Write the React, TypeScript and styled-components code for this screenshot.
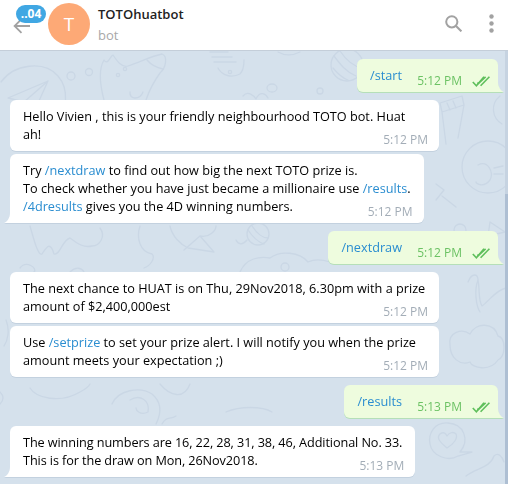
import { createGlobalStyle, styled } from "styled-components";

const GlobalStyle = createGlobalStyle`
  html, body {
    margin: 0;
    padding: 0;
    background: #d5e1ec;
  }
  #root {
    height: 484px;
  }
`;

const Page = styled.div`
  position: relative;
  width: 508px;
  height: 484px;
  overflow: hidden;
  display: flex;
  flex-direction: column;
  font-family: "Open Sans", sans-serif;
  font-size: 12.7px;
  line-height: 18px;
  color: #000;
`;

const Header = styled.header`
  position: relative;
  z-index: 2;
  flex: 0 0 51px;
  box-sizing: border-box;
  display: flex;
  align-items: center;
  padding: 0 14px 3px 13px;
  background: #fff;
  border-bottom: 1px solid #c4ced9;
`;

const BackButton = styled.div`
  position: relative;
  width: 17px;
  height: 16px;
  margin-top: 4px;
  margin-right: 18px;
  color: #a2a2a2;
`;

const UnreadBadge = styled.span`
  position: absolute;
  top: -13px;
  left: 3px;
  width: 30px;
  height: 18px;
  border-radius: 9px;
  background: #40a7e3;
  color: #fff;
  font-size: 12px;
  font-weight: 700;
  line-height: 18px;
  text-align: center;
`;

const Avatar = styled.div`
  flex: none;
  width: 42px;
  height: 42px;
  margin-right: 8px;
  border-radius: 50%;
  background: #fda976;
  color: #fff;
  font-size: 19px;
  line-height: 42px;
  text-align: center;
`;

const PeerInfo = styled.div`
  flex: 1;
  display: flex;
  flex-direction: column;
  gap: 3px;
  padding-top: 1px;
`;

const PeerName = styled.div`
  font-size: 13px;
  font-weight: 600;
  color: #222;
`;

const PeerStatus = styled.div`
  font-size: 13px;
  color: #a8a8a8;
`;

const HeaderIcons = styled.div`
  display: flex;
  align-items: center;
  gap: 27px;
  color: #a2a2a2;
`;

const Chat = styled.main`
  position: relative;
  flex: 1;
  display: flex;
  flex-direction: column;
  padding: 8px 10px 0;
`;

const Doodles = styled.svg`
  position: absolute;
  top: -51px;
  left: 0;
  fill: none;
  stroke: #cad7e5;
  stroke-width: 1.3;
  stroke-linecap: round;
  stroke-linejoin: round;
`;

const ScrollTrack = styled.div`
  position: absolute;
  top: 0;
  right: 0;
  bottom: 0;
  width: 3px;
  background: #c6d3e1;
`;

const ScrollThumb = styled.div`
  position: absolute;
  top: 143px;
  left: 0;
  right: 0;
  bottom: 0;
  background: #aebfd3;
`;

const Bubble = styled.div<{ $out?: boolean; $tail?: boolean; $tight?: boolean; $gap: number }>`
  position: relative;
  box-sizing: border-box;
  max-width: 429px;
  margin-top: ${(p) => p.$gap}px;
  padding: 7px 13px 8px;
  align-self: ${(p) => (p.$out ? "flex-end" : "flex-start")};
  border-radius: 6px;
  border-bottom-left-radius: ${(p) => (p.$tail && !p.$out ? 0 : 6)}px;
  border-bottom-right-radius: ${(p) => (p.$tail && p.$out ? 0 : 6)}px;
  background: ${(p) => (p.$out ? "#eefcde" : "#fff")};
  filter: drop-shadow(0 1px 0 ${(p) => (p.$out ? "#b5dfb8" : "#c3d1df")});
  letter-spacing: ${(p) => (p.$tight ? "-0.1px" : "normal")};
  white-space: pre-line;

  &::after {
    content: ${(p) => (p.$tail ? '""' : "none")};
    position: absolute;
    bottom: 0;
    width: 6px;
    height: 10px;
    background: inherit;
    ${(p) =>
      p.$out
        ? `right: -6px; clip-path: path("M0 0 C0 5 3 9 6 10 L0 10 Z");`
        : `left: -6px; clip-path: path("M6 0 C6 5 3 9 0 10 L6 10 Z");`}
  }
`;

const Command = styled.span`
  color: #2a8dd0;
`;

const MetaSpacer = styled.span`
  display: inline-block;
  width: 83px;
`;

const Meta = styled.span<{ $out?: boolean }>`
  position: absolute;
  right: ${(p) => (p.$out ? 8 : 11)}px;
  bottom: 2px;
  display: flex;
  align-items: center;
  gap: 10px;
  font-size: 12px;
  letter-spacing: normal;
  color: ${(p) => (p.$out ? "#6cc264" : "#a3adb7")};
  white-space: nowrap;
`;

const Ticks = styled.svg`
  fill: none;
  stroke: #5fbf5c;
  stroke-width: 1.6;
`;

type Message = {
  text: string;
  time: string;
  out?: boolean;
  tail?: boolean;
  tight?: boolean;
  gap: number;
};

const messages: Message[] = [
  { text: "/start", time: "5:12 PM", out: true, tail: true, gap: 0 },
  {
    text: "Hello Vivien , this is your friendly neighbourhood TOTO bot. Huat ah!",
    time: "5:12 PM",
    gap: 8,
  },
  {
    text: "Try /nextdraw to find out how big the next TOTO prize is.\nTo check whether you have just became a millionaire use /results.\n/4dresults gives you the 4D winning numbers.",
    time: "5:12 PM",
    tail: true,
    gap: 3,
  },
  { text: "/nextdraw", time: "5:12 PM", out: true, tail: true, gap: 8 },
  {
    text: "The next chance to HUAT is on Thu, 29Nov2018, 6.30pm with a prize amount of $2,400,000est",
    time: "5:12 PM",
    gap: 8,
  },
  {
    text: "Use /setprize to set your prize alert. I will notify you when the prize amount meets your expectation ;)",
    time: "5:12 PM",
    gap: 3,
  },
  { text: "/results", time: "5:13 PM", out: true, tail: true, gap: 8 },
  {
    text: "The winning numbers are 16, 22, 28, 31, 38, 46, Additional No. 33.\nThis is for the draw on Mon, 26Nov2018.",
    time: "5:13 PM",
    tail: true,
    tight: true,
    gap: 8,
  },
];

const renderText = (text: string) =>
  text.split(/(\/\w+)/).map((part, i) =>
    part.startsWith("/") ? <Command key={i}>{part}</Command> : part
  );

const BackArrow = () => (
  <svg width="17" height="16" viewBox="0 0 17 16" fill="none" stroke="currentColor" strokeWidth="1.8">
    <path d="M17 8H2M8.5 1.2L1.6 8l6.9 6.8" />
  </svg>
);

const SearchIcon = () => (
  <svg width="17" height="17" viewBox="0 0 17 17" fill="none" stroke="currentColor" strokeWidth="2">
    <circle cx="6.8" cy="6.8" r="5.6" />
    <path d="M10.8 10.8L16.4 16.4" />
  </svg>
);

const DotsIcon = () => (
  <svg width="5" height="19" viewBox="0 0 5 19" fill="currentColor">
    <circle cx="2.5" cy="2.5" r="2.2" />
    <circle cx="2.5" cy="9.5" r="2.2" />
    <circle cx="2.5" cy="16.5" r="2.2" />
  </svg>
);

const DoubleTick = () => (
  <Ticks width="18" height="11" viewBox="0 0 18 11">
    <path d="M.8 6l3.6 3.8L12 .8" />
    <path d="M5.4 6.6l1 .9L13.6 .8" />
    <path d="M8.6 9.8L17.4 .8" />
  </Ticks>
);

const App = () => {
  return (
    <Page>
      <GlobalStyle />
      <Header>
        <BackButton>
          <BackArrow />
          <UnreadBadge>..04</UnreadBadge>
        </BackButton>
        <Avatar>T</Avatar>
        <PeerInfo>
          <PeerName>TOTOhuatbot</PeerName>
          <PeerStatus>bot</PeerStatus>
        </PeerInfo>
        <HeaderIcons>
          <SearchIcon />
          <DotsIcon />
        </HeaderIcons>
      </Header>
      <Chat>
        <Doodles width="508" height="484" viewBox="0 0 508 484">
          {/* plane in a circle */}
          <path d="M1 82C14 64 44 60 58 76C70 90 66 112 58 118" />
          <path d="M48 81L8 98L24 102L48 81L34 112L24 102" />
          <circle cx="71" cy="76" r="4" />
          <circle cx="89" cy="72" r="3.5" />
          <circle cx="320" cy="91" r="3" />
          {/* dog */}
          <path d="M104 100C100 85 98 70 104 60C108 66 110 56 113 55C117 61 122 68 128 66C140 62 152 56 162 54C168 56 166 68 160 73C155 80 150 88 146 100" />
          <path d="M147 60C152 66 158 68 163 69M130 92C129 100 140 100 143 92" />
          <circle cx="118" cy="75" r="1.6" />
          <circle cx="125" cy="69" r="1.6" />
          {/* boat */}
          <path d="M210 52H228M212 57H232M214 62H236M218 68C222 76 232 78 240 74C244 70 244 64 244 60" />
          <circle cx="230" cy="72" r="1.6" />
          <path d="M278 52C285 56 292 56 300 52" />
          {/* yarn */}
          <circle cx="347" cy="65" r="16" />
          <path d="M334 56C340 64 346 72 356 76M340 51C346 60 352 66 362 68M333 68C338 74 342 78 348 80" />
          {/* shells */}
          <path d="M243 96C248 90 254 96 256 99C260 90 266 94 268 98" />
          <ellipse cx="272" cy="88" rx="5" ry="4" />
          {/* basket */}
          <path d="M440 103L462 96L464 105L442 112ZM442 112L446 144M464 105L458 138M447 103L450 110M453 101L456 108" />
          {/* curled cat */}
          <circle cx="488" cy="167" r="26" />
          <path d="M478 165C488 160 494 172 490 180C484 188 476 184 476 182M494 168L503 166M494 174L503 174" />
          <path d="M500 96C490 104 492 118 502 124" />
          {/* small plane */}
          <path d="M436 200L444 190L436 184M442 196L456 207M490 222L505 232L488 236Z" />
          <circle cx="460" cy="230" r="6" />
          {/* lower left */}
          <path d="M30 226C34 240 38 256 42 254C46 248 50 240 54 254C60 256 62 240 70 238C78 244 84 248 92 246C100 246 106 236 100 228" />
          <path d="M20 268C26 260 38 268 34 272M70 272C76 266 82 268 84 272" />
          {/* cat with kite */}
          <path d="M140 226C136 238 140 252 152 254C156 258 150 266 144 268M170 226C172 236 180 244 188 248L214 252L200 236L184 250M200 236C210 238 216 230 216 226" />
          {/* yarn 2 */}
          <circle cx="258" cy="234" r="11" />
          <path d="M248 230C252 236 258 242 264 244M252 226C256 232 262 238 268 238M247 240C242 246 238 244 236 240" />
          {/* cloud */}
          <path d="M240 272C246 258 260 256 270 258C280 250 300 252 308 262C316 258 324 260 330 262" />
          <circle cx="285" cy="267" r="4" />
          {/* lower right */}
          <path d="M468 282C472 272 478 274 478 280C480 290 478 300 482 306C490 300 496 290 506 288M478 280C474 290 476 306 480 312" />
          <path d="M450 345C448 332 462 328 470 334C476 322 494 322 498 336C506 338 506 356 498 360C490 372 472 368 470 362C460 366 450 358 450 345Z" />
          {/* heart in bubble */}
          <path d="M460 452C470 440 464 424 448 423C434 422 428 434 430 444C432 456 448 462 458 456L472 452Z" />
          <path d="M447 448C440 442 436 438 440 434C444 431 446 434 447 436C449 433 453 431 456 434C458 438 454 444 447 448Z" />
          <path d="M466 476C476 468 490 468 494 456C498 452 502 456 504 462" />
          {/* bottom band */}
          <path d="M30 388C36 398 60 404 80 392C88 388 90 384 90 384M112 404C118 390 140 386 152 394C164 404 160 416 156 424M130 400C140 394 150 400 148 412C140 416 136 410 136 408M162 424C166 416 170 420 176 416" />
          <path d="M226 412C240 406 262 406 272 412" />
          <path d="M160 384C170 396 184 400 190 384" />
          <path d="M6 320C10 330 8 340 4 346M0 392C4 396 4 400 0 404" />
        </Doodles>
        <ScrollTrack>
          <ScrollThumb />
        </ScrollTrack>
        {messages.map((m, i) => (
          <Bubble key={i} $out={m.out} $tail={m.tail} $tight={m.tight} $gap={m.gap}>
            {renderText(m.text)}
            {m.out && <MetaSpacer />}
            <Meta $out={m.out}>
              {m.time}
              {m.out && <DoubleTick />}
            </Meta>
          </Bubble>
        ))}
      </Chat>
    </Page>
  );
};

export default App;
